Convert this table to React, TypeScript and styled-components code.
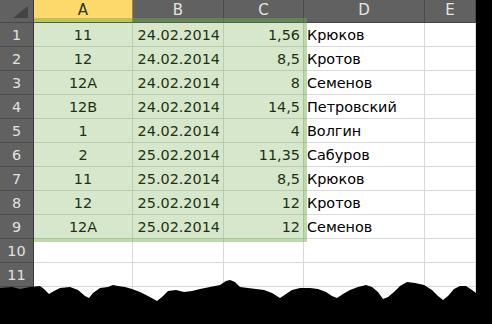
import styled, { createGlobalStyle } from 'styled-components';

const COLUMNS = ['A', 'B', 'C', 'D', 'E'];

type Row = [string, string, string, string];

const ROWS: Row[] = [
  ['11', '24.02.2014', '1,56', 'Крюков'],
  ['12', '24.02.2014', '8,5', 'Кротов'],
  ['12A', '24.02.2014', '8', 'Семенов'],
  ['12B', '24.02.2014', '14,5', 'Петровский'],
  ['1', '24.02.2014', '4', 'Волгин'],
  ['2', '25.02.2014', '11,35', 'Сабуров'],
  ['11', '25.02.2014', '8,5', 'Крюков'],
  ['12', '25.02.2014', '12', 'Кротов'],
  ['12A', '25.02.2014', '12', 'Семенов'],
  ['', '', '', ''],
  ['', '', '', ''],
  ['', '', '', ''],
];

const ALIGN: Array<'left' | 'center' | 'right'> = ['center', 'right', 'right', 'left', 'left'];

// rough outline of the torn paper edge at the bottom
const TEAR =
  '0,288 12,287 20,289 30,287 40,286 44,289 49,294 54,291 60,288 70,287 78,290 85,296 89,298 93,293 100,288 108,287 113,285 118,286 125,287 132,289 140,292 148,296 157,301 162,297 168,291 176,290 184,292 192,291 200,289 210,287 220,285 226,281 230,280 235,282 240,287 248,288 256,289 264,290 272,293 280,298 286,294 292,290 300,288 310,288 318,289 326,292 332,296 337,298 343,294 350,290 358,287 366,285 372,287 378,292 383,299 388,297 394,292 400,286 407,282 415,283 424,285 432,290 438,296 443,300 448,296 454,289 460,286 466,286 472,290 476,293 492,293 492,324 0,324';

const GlobalStyle = createGlobalStyle`
  body {
    margin: 0;
    background: #000;
  }
`;

export default function App() {
  return (
    <>
      <GlobalStyle />
      <Frame>
        <Sheet>
          <Corner>
            <svg width="16" height="13" viewBox="0 0 16 13">
              <polygon points="15,0 15,12 0,12" fill="#444" />
            </svg>
          </Corner>
          {COLUMNS.map(col => (
            <ColumnHeader key={col} $active={col === 'A'}>
              {col}
            </ColumnHeader>
          ))}
          {ROWS.map((row, i) => (
            <RowGroup key={i}>
              <RowHeader>{i + 1}</RowHeader>
              {row.map((value, j) => (
                <Cell key={j} $align={ALIGN[j]}>
                  {value}
                </Cell>
              ))}
              <Cell $align="left" />
            </RowGroup>
          ))}
          <Selection />
        </Sheet>
        <Tear width="492" height="324" viewBox="0 0 492 324">
          <polygon points={TEAR} fill="#000" />
        </Tear>
      </Frame>
    </>
  );
}

const Frame = styled.div`
  position: relative;
  width: 492px;
  height: 324px;
  overflow: hidden;
  background: #000;
  font-family: 'DejaVu Sans', 'Liberation Sans', sans-serif;
  font-size: 14.4px;
`;

const Sheet = styled.div`
  position: relative;
  width: 476px;
  display: grid;
  grid-template-columns: 34px 99px 91px 80px 121px 51px;
  grid-template-rows: 23px;
  grid-auto-rows: 24px;
  background: #fff;
`;

const RowGroup = styled.div`
  display: contents;
`;

const Corner = styled.div`
  display: flex;
  align-items: flex-start;
  justify-content: flex-end;
  padding: 6px 4px 0 0;
  box-sizing: border-box;
  background: #616161;
  border-right: 1px solid #3d3d3d;
  border-bottom: 1px solid #474747;
`;

const ColumnHeader = styled.div<{ $active?: boolean }>`
  display: flex;
  align-items: center;
  justify-content: center;
  box-sizing: border-box;
  padding-bottom: 2px;
  font-size: 15px;
  background: ${p => (p.$active ? '#fdd86a' : '#616161')};
  color: ${p => (p.$active ? '#333' : '#e4e4e4')};
  border-right: 1px solid ${p => (p.$active ? '#a5863c' : '#4a4a4a')};
  border-bottom: 1px solid #474747;
`;

const RowHeader = styled.div`
  display: flex;
  align-items: center;
  justify-content: center;
  box-sizing: border-box;
  background: #616161;
  color: #e2e2e2;
  border-right: 1px solid #3a3a3a;
  border-bottom: 1px solid #4b4b4b;
`;

const Cell = styled.div<{ $align: 'left' | 'center' | 'right' }>`
  display: flex;
  align-items: center;
  justify-content: ${p =>
    p.$align === 'center' ? 'center' : p.$align === 'right' ? 'flex-end' : 'flex-start'};
  box-sizing: border-box;
  padding: 0 3px 0 3px;
  color: #000;
  white-space: nowrap;
  border-right: 1px solid #d9d9d9;
  border-bottom: 1px solid #d9d9d9;
`;

const Selection = styled.div`
  position: absolute;
  left: 34px;
  top: 18px;
  width: 273px;
  height: 224px;
  box-sizing: border-box;
  border: 4px solid rgba(110, 170, 70, 0.45);
  border-left-width: 0;
  background: rgba(110, 170, 70, 0.28);
  background-clip: padding-box;
  pointer-events: none;
`;

const Tear = styled.svg`
  position: absolute;
  left: 0;
  top: 0;
  pointer-events: none;
`;
